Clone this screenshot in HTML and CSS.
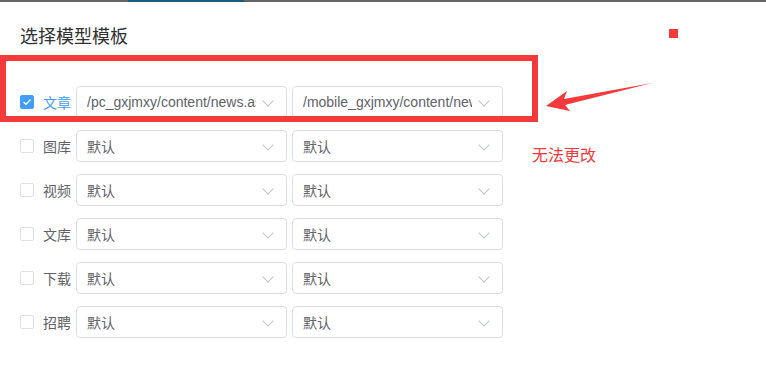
FILE: index.html
```html
<!DOCTYPE html>
<html lang="zh-CN">

<head>
    <meta charset="UTF-8">
    <meta name="viewport" content="width=device-width, initial-scale=1.0">
    <title>选择模型模板</title>
    <link rel="stylesheet" href="styles.css">
</head>

<body>
    <!-- Rest der Seite hinter dem Dialog -->
    <div class="backdrop">
        <span class="backdrop-tab"></span>
    </div>

    <div class="dialog">
        <h3 class="dialog-title">选择模型模板</h3>

        <div class="rows">
            <div class="row">
                <span class="checkbox checked">
                    <svg width="10" height="8" viewBox="0 0 10 8"><path d="M1.5 4 L4 6.3 L8.5 1.6" fill="none" stroke="#fff" stroke-width="1.4"/></svg>
                </span>
                <span class="label active">文章</span>
                <div class="select"><span class="value path">/pc_gxjmxy/content/news.aspx</span><span class="arrow"></span></div>
                <div class="select"><span class="value path">/mobile_gxjmxy/content/news.aspx</span><span class="arrow"></span></div>
            </div>

            <div class="row">
                <span class="checkbox"></span>
                <span class="label">图库</span>
                <div class="select"><span class="value">默认</span><span class="arrow"></span></div>
                <div class="select"><span class="value">默认</span><span class="arrow"></span></div>
            </div>

            <div class="row">
                <span class="checkbox"></span>
                <span class="label">视频</span>
                <div class="select"><span class="value">默认</span><span class="arrow"></span></div>
                <div class="select"><span class="value">默认</span><span class="arrow"></span></div>
            </div>

            <div class="row">
                <span class="checkbox"></span>
                <span class="label">文库</span>
                <div class="select"><span class="value">默认</span><span class="arrow"></span></div>
                <div class="select"><span class="value">默认</span><span class="arrow"></span></div>
            </div>

            <div class="row">
                <span class="checkbox"></span>
                <span class="label">下载</span>
                <div class="select"><span class="value">默认</span><span class="arrow"></span></div>
                <div class="select"><span class="value">默认</span><span class="arrow"></span></div>
            </div>

            <div class="row">
                <span class="checkbox"></span>
                <span class="label">招聘</span>
                <div class="select"><span class="value">默认</span><span class="arrow"></span></div>
                <div class="select"><span class="value">默认</span><span class="arrow"></span></div>
            </div>
        </div>

        <!-- Anmerkungen im Screenshot -->
        <div class="mark-box"></div>
        <div class="mark-dot"></div>
        <svg class="mark-arrow" width="120" height="30" viewBox="0 0 120 30">
            <polygon points="1,23 22,8 19,16 107,0 20,22 25,28" fill="#f43a3a"/>
        </svg>
        <div class="mark-text">无法更改</div>
    </div>
</body>

</html>
```

FILE: styles.css
```css
body {
    margin: 0;
    padding: 0;
    background-color: #fff;
    font-family: "Noto Sans CJK SC", sans-serif;
}

.backdrop {
    height: 2px;
    background-color: #656565;
    position: relative;
}

.backdrop-tab {
    display: block;
    margin-left: 128px;
    width: 116px;
    height: 2px;
    background-color: #1d5a7c;
}

.dialog {
    position: relative;
    height: 372px;
    padding: 0 20px;
    box-sizing: border-box;
}

.dialog-title {
    margin: 0;
    padding-top: 21px;
    font-size: 18px;
    line-height: 24px;
    font-weight: normal;
    color: #303133;
}

.rows {
    display: flex;
    flex-direction: column;
    gap: 12px;
    margin-top: 39px;
}

.row {
    display: flex;
    align-items: center;
    height: 32px;
}

.checkbox {
    width: 14px;
    height: 14px;
    box-sizing: border-box;
    border: 1px solid #dcdfe6;
    border-radius: 2px;
    background-color: #fff;
    display: flex;
    align-items: center;
    justify-content: center;
}

.checkbox.checked {
    background-color: #409eff;
    border-color: #409eff;
}

.label {
    width: 33px;
    margin-left: 9px;
    font-size: 14px;
    color: #606266;
    line-height: 32px;
}

.label.active {
    color: #409eff;
}

.select {
    position: relative;
    width: 211px;
    height: 32px;
    margin-right: 5px;
    box-sizing: border-box;
    border: 1px solid #dcdfe6;
    border-radius: 4px;
    padding: 0 30px 0 10px;
    display: flex;
    align-items: center;
    overflow: hidden;
}

.value {
    font-size: 14px;
    color: #606266;
    white-space: nowrap;
    overflow: hidden;
}

.value.path {
    font-family: "Liberation Sans", Arial, sans-serif;
}

.arrow {
    position: absolute;
    right: 14px;
    top: 10px;
    width: 7px;
    height: 7px;
    border-right: 1px solid #c0c4cc;
    border-bottom: 1px solid #c0c4cc;
    transform: rotate(45deg);
}

.mark-box {
    position: absolute;
    left: 0;
    top: 53px;
    width: 538px;
    height: 67px;
    box-sizing: border-box;
    border: 6px solid #f43a3a;
}

.mark-dot {
    position: absolute;
    left: 669px;
    top: 27px;
    width: 9px;
    height: 9px;
    background-color: #f43a3a;
}

.mark-arrow {
    position: absolute;
    left: 545px;
    top: 81px;
}

.mark-text {
    position: absolute;
    left: 532px;
    top: 141px;
    font-size: 16px;
    line-height: 22px;
    color: #f43a3a;
}
```
